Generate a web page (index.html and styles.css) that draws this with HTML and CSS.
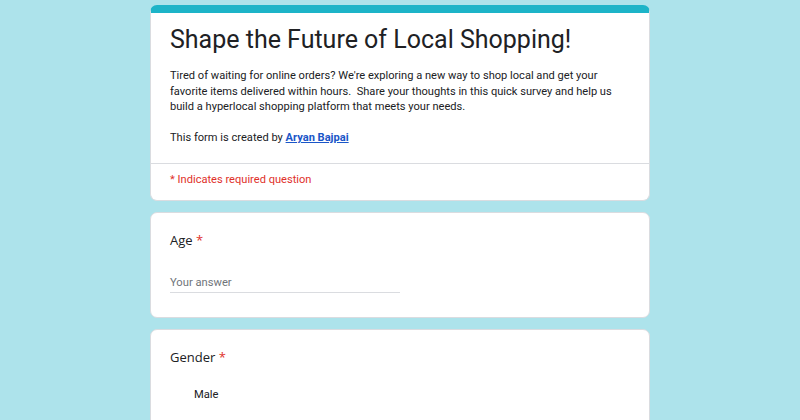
FILE: index.html
```html
<!DOCTYPE html>
<html>
<head>
<meta charset="utf-8">
<link rel="stylesheet" href="styles.css">
</head>
<body>
<main class="form">
  <section class="card header-card">
    <div class="header-body">
      <h1 class="title">Shape the Future of Local Shopping!</h1>
      <p class="desc">Tired of waiting for online orders? We're exploring a new way to shop local and get your favorite items delivered within hours.&nbsp; Share your thoughts in this quick survey and help us build a hyperlocal shopping platform that meets your needs.<br><br>This form is created by <a class="author" href="#">Aryan Bajpai</a></p>
    </div>
    <div class="required-note">* Indicates required question</div>
  </section>
  <section class="card question">
    <div class="q-label">Age <span class="star">*</span></div>
    <div class="answer">Your answer</div>
  </section>
  <section class="card question">
    <div class="q-label">Gender <span class="star">*</span></div>
    <div class="options">
      <div class="option"><span class="radio"></span><span>Male</span></div>
    </div>
  </section>
</main>
</body>
</html>
```
FILE: styles.css
```css
html, body {
  margin: 0;
  padding: 0;
}
body {
  background: #ade3eb;
  font-family: Roboto, "Liberation Sans", sans-serif;
  color: #202124;
  height: 420px;
  overflow: hidden;
}
.form {
  width: 500px;
  margin: 5px auto 0;
  display: flex;
  flex-direction: column;
  gap: 11px;
}
.card {
  background: #fff;
  border: 1px solid #dadce0;
  border-radius: 7px;
}
.header-card {
  border-top: 8px solid #1db4c8;
}
.header-body {
  padding: 9px 19px 17px;
  border-bottom: 1px solid #dadce0;
}
.title {
  margin: 0 0 10px;
  font-family: Roboto, "Open Sans", sans-serif;
  font-weight: 400;
  font-size: 25px;
  line-height: 36px;
  color: #202124;
}
.desc {
  margin: 0;
  font-size: 11.1px;
  line-height: 15.5px;
  color: #202124;
}
.author {
  color: #1a56c8;
  font-weight: 700;
}
.required-note {
  padding: 8px 19px 12px;
  font-size: 11.1px;
  line-height: 16px;
  color: #e0302a;
}
.question {
  padding: 18px 19px 24px;
}
.q-label {
  font-family: "Open Sans", Roboto, sans-serif;
  font-size: 13px;
  line-height: 18px;
}
.star {
  color: #e0302a;
}
.answer {
  margin-top: 26px;
  width: 230px;
  font-size: 11.2px;
  line-height: 16px;
  padding-bottom: 1px;
  color: #70757a;
  border-bottom: 1px solid #dadce0;
}
.options {
  margin-top: 21px;
}
.option {
  display: flex;
  align-items: center;
  gap: 9px;
  font-size: 11.2px;
  line-height: 16px;
}
.radio {
  width: 15px;
  height: 15px;
}
```
